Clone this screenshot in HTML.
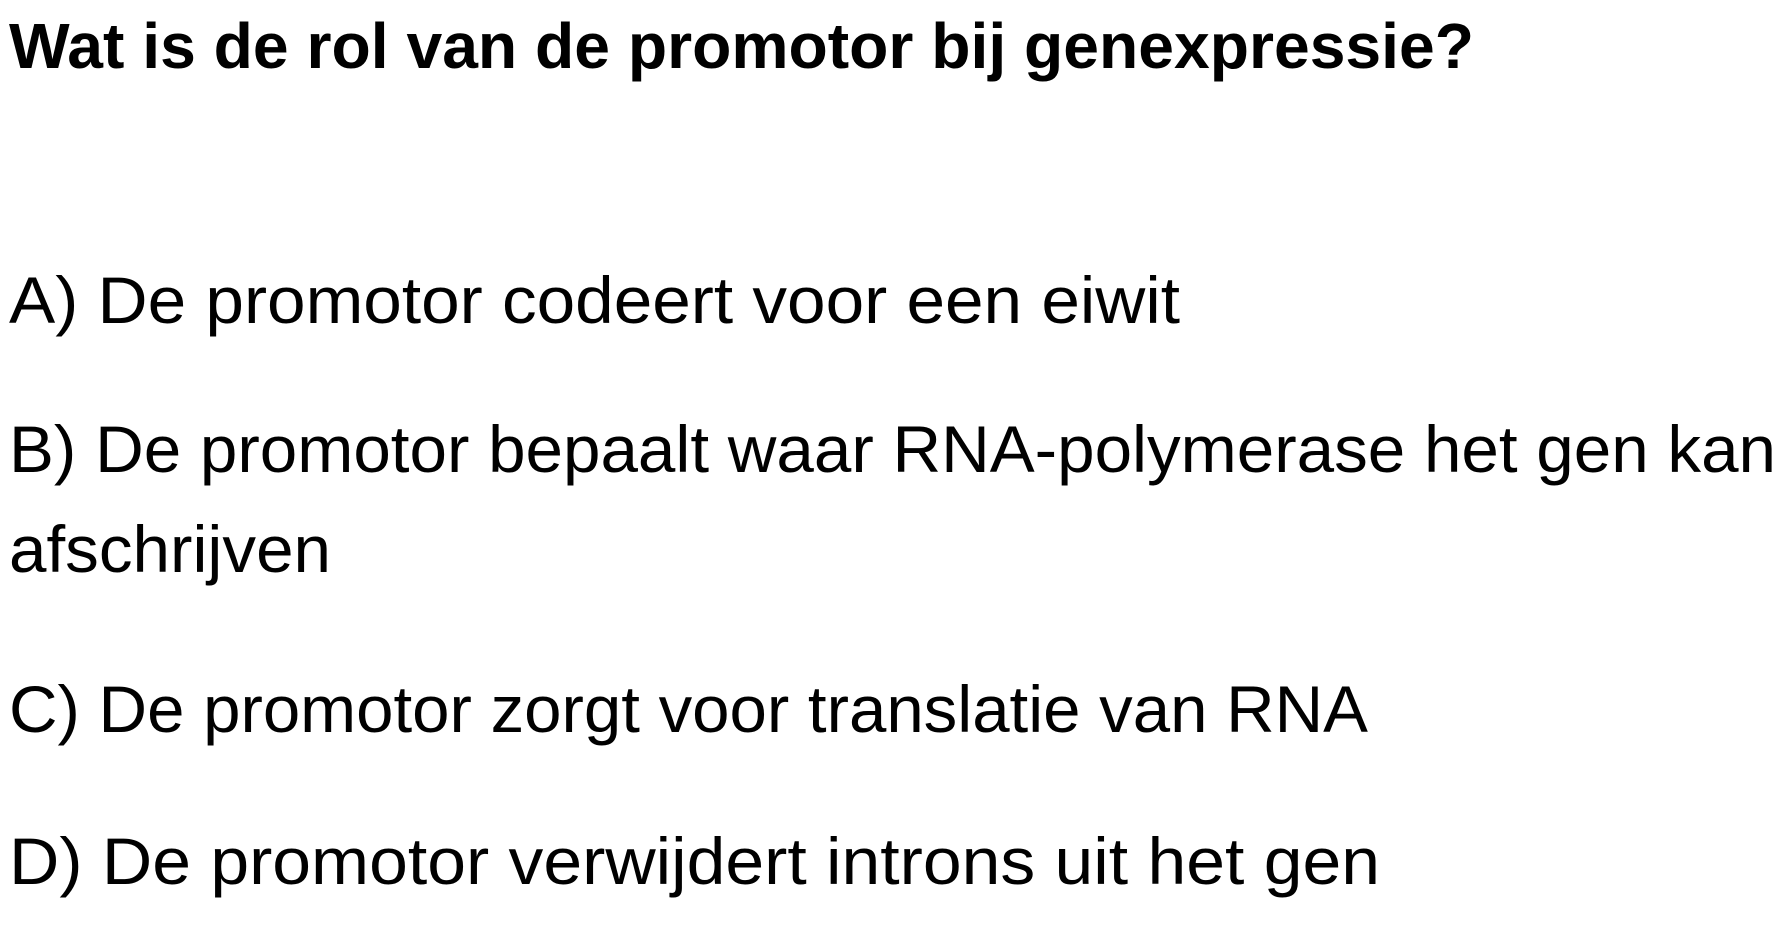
<!DOCTYPE html>
<html><head><meta charset="utf-8"><style>
html,body{margin:0;padding:0;background:#fff;width:1788px;height:938px;overflow:hidden}
svg{display:block}
text{font-family:"Liberation Sans",sans-serif;fill:#000}
</style></head><body>
<svg width="1788" height="938" viewBox="0 0 1788 938">
<text x="9" y="68" font-size="64" font-weight="bold" textLength="1465" lengthAdjust="spacingAndGlyphs">Wat is de rol van de promotor bij genexpressie?</text>
<text x="9" y="323" font-size="66" textLength="1171" lengthAdjust="spacingAndGlyphs">A) De promotor codeert voor een eiwit</text>
<text x="9" y="472" font-size="66" textLength="1767" lengthAdjust="spacingAndGlyphs">B) De promotor bepaalt waar RNA-polymerase het gen kan</text>
<text x="9" y="572" font-size="66" textLength="322" lengthAdjust="spacingAndGlyphs">afschrijven</text>
<text x="9" y="732" font-size="66" textLength="1359" lengthAdjust="spacingAndGlyphs">C) De promotor zorgt voor translatie van RNA</text>
<text x="9" y="884" font-size="66" textLength="1371" lengthAdjust="spacingAndGlyphs">D) De promotor verwijdert introns uit het gen</text>
</svg>
</body></html>
